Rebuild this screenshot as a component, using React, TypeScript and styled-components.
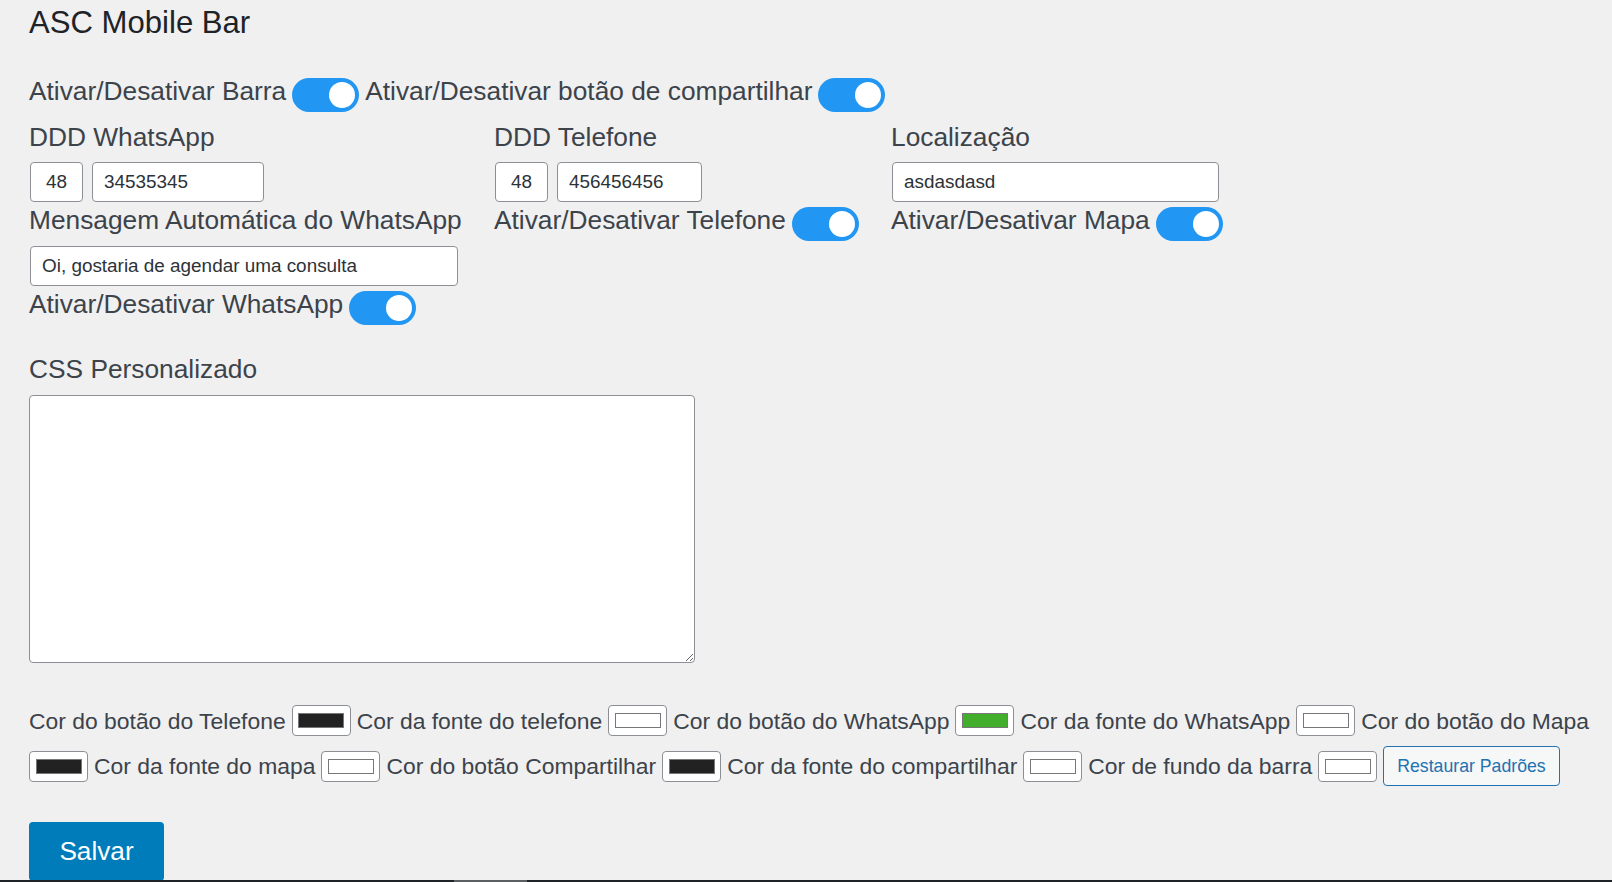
import React from "react";
import styled, { createGlobalStyle } from "styled-components";

const GlobalStyle = createGlobalStyle`
  html, body {
    margin: 0;
    padding: 0;
    background: #f0f0f1;
    overflow: hidden;
  }
  body {
    font-family: "Liberation Sans", Arial, sans-serif;
    color: #3c434a;
  }
  * { box-sizing: border-box; }
`;

const Page = styled.div`
  padding: 3px 8px 0 29px;
`;

const Title = styled.h1`
  margin: 0;
  font-size: 31.1px;
  line-height: 40px;
  font-weight: 400;
  color: #1d2327;
`;

const SwitchRow = styled.div<{ $mt?: number }>`
  display: flex;
  align-items: flex-start;
  gap: 6px;
  margin-top: ${(p) => p.$mt ?? 0}px;
`;

const LabelText = styled.span`
  font-size: 26.3px;
  line-height: 30px;
  color: #3c434a;
  white-space: nowrap;
`;

const FieldLabel = styled.div<{ $mt?: number }>`
  font-size: 26.3px;
  line-height: 30px;
  color: #3c434a;
  white-space: nowrap;
  margin-top: ${(p) => p.$mt ?? 0}px;
`;

const Switch = styled.span`
  position: relative;
  flex: none;
  width: 67px;
  height: 34px;
  margin-top: 2px;
  border-radius: 34px;
  background: #2196f3;
  &::before {
    content: "";
    position: absolute;
    left: 37px;
    top: 4px;
    width: 26px;
    height: 26px;
    border-radius: 50%;
    background: #fff;
  }
`;

const Fields = styled.div`
  display: grid;
  grid-template-columns: 465px 397px auto;
  align-items: start;
  margin-top: 10px;
`;

const Column = styled.div`
  display: flex;
  flex-direction: column;
  align-items: flex-start;
`;

const InputRow = styled.div<{ $mt?: number }>`
  display: flex;
  gap: 7px;
  margin-top: ${(p) => p.$mt ?? 10}px;
`;

const TextInput = styled.input<{ $w: number; $center?: boolean }>`
  width: ${(p) => p.$w}px;
  height: 40px;
  margin: 0 1px;
  padding: 0 11px;
  border: 1px solid #8c8f94;
  border-radius: 4px;
  background: #fff;
  font-family: "Liberation Sans", Arial, sans-serif;
  font-size: 18.9px;
  color: #2c3338;
  text-align: ${(p) => (p.$center ? "center" : "left")};
  outline: none;
`;

const CssArea = styled.textarea`
  display: block;
  width: 666px;
  height: 268px;
  margin-top: 11px;
  border: 1px solid #8c8f94;
  border-radius: 4px;
  background: #fff;
  font-family: "Liberation Mono", monospace;
  font-size: 18px;
  resize: both;
  outline: none;
`;

const Colors = styled.div`
  display: flex;
  flex-wrap: wrap;
  align-items: center;
  column-gap: 6px;
  row-gap: 10px;
  margin-top: 42px;
`;

const ColorText = styled.span`
  font-size: 22.9px;
  line-height: 26px;
  color: #3c434a;
  white-space: nowrap;
`;

const Swatch = styled.span`
  display: flex;
  align-items: center;
  justify-content: center;
  flex: none;
  width: 59px;
  height: 31px;
  border: 1px solid #8c8f94;
  border-radius: 4px;
  background: #fff;
`;

const SwatchFill = styled.span<{ $c: string }>`
  width: 46px;
  height: 15px;
  border: 1px solid #777;
  background: ${(p) => p.$c};
`;

const SecondaryButton = styled.button`
  height: 40px;
  padding: 0 13px;
  border: 1px solid #2271b1;
  border-radius: 4px;
  background: #f6f7f7;
  color: #2271b1;
  font-family: "Liberation Sans", Arial, sans-serif;
  font-size: 17.7px;
  cursor: pointer;
`;

const PrimaryButton = styled.button`
  display: block;
  width: 135px;
  height: 59px;
  margin-top: 36px;
  border: 0;
  border-radius: 4px;
  background: #007cba;
  color: #fff;
  font-family: "Liberation Sans", Arial, sans-serif;
  font-size: 26.2px;
  cursor: pointer;
`;

const BottomEdge = styled.div`
  position: fixed;
  left: 0;
  right: 0;
  bottom: 0;
  height: 2px;
  background: linear-gradient(
    to right,
    #1d2327 0 454px,
    #5c5f62 454px 527px,
    #1d2327 527px
  );
`;

type ColorItem = { label: string; color: string };

const colors: ColorItem[] = [
  { label: "Cor do botão do Telefone", color: "#222222" },
  { label: "Cor da fonte do telefone", color: "#ffffff" },
  { label: "Cor do botão do WhatsApp", color: "#43ae2c" },
  { label: "Cor da fonte do WhatsApp", color: "#ffffff" },
  { label: "Cor do botão do Mapa", color: "#222222" },
  { label: "Cor da fonte do mapa", color: "#ffffff" },
  { label: "Cor do botão Compartilhar", color: "#222222" },
  { label: "Cor da fonte do compartilhar", color: "#ffffff" },
  { label: "Cor de fundo da barra", color: "#ffffff" },
];

export default function App() {
  return (
    <>
      <GlobalStyle />
      <Page>
        <Title>ASC Mobile Bar</Title>

        <SwitchRow $mt={33}>
          <LabelText>Ativar/Desativar Barra</LabelText>
          <Switch />
          <LabelText>Ativar/Desativar botão de compartilhar</LabelText>
          <Switch />
        </SwitchRow>

        <Fields>
          <Column>
            <FieldLabel>DDD WhatsApp</FieldLabel>
            <InputRow>
              <TextInput $w={53} $center defaultValue="48" />
              <TextInput $w={172} defaultValue="34535345" />
            </InputRow>
            <FieldLabel $mt={3}>Mensagem Automática do WhatsApp</FieldLabel>
            <InputRow $mt={11}>
              <TextInput $w={428} defaultValue="Oi, gostaria de agendar uma consulta" />
            </InputRow>
            <SwitchRow $mt={3}>
              <LabelText>Ativar/Desativar WhatsApp</LabelText>
              <Switch />
            </SwitchRow>
          </Column>

          <Column>
            <FieldLabel>DDD Telefone</FieldLabel>
            <InputRow>
              <TextInput $w={53} $center defaultValue="48" />
              <TextInput $w={145} defaultValue="456456456" />
            </InputRow>
            <SwitchRow $mt={3}>
              <LabelText>Ativar/Desativar Telefone</LabelText>
              <Switch />
            </SwitchRow>
          </Column>

          <Column>
            <FieldLabel>Localização</FieldLabel>
            <InputRow>
              <TextInput $w={327} defaultValue="asdasdasd" />
            </InputRow>
            <SwitchRow $mt={3}>
              <LabelText>Ativar/Desativar Mapa</LabelText>
              <Switch />
            </SwitchRow>
          </Column>
        </Fields>

        <FieldLabel $mt={29}>CSS Personalizado</FieldLabel>
        <CssArea />

        <Colors>
          {colors.map((c) => (
            <React.Fragment key={c.label}>
              <ColorText>{c.label}</ColorText>
              <Swatch>
                <SwatchFill $c={c.color} />
              </Swatch>
            </React.Fragment>
          ))}
          <SecondaryButton>Restaurar Padrões</SecondaryButton>
        </Colors>

        <PrimaryButton>Salvar</PrimaryButton>
      </Page>
      <BottomEdge />
    </>
  );
}
